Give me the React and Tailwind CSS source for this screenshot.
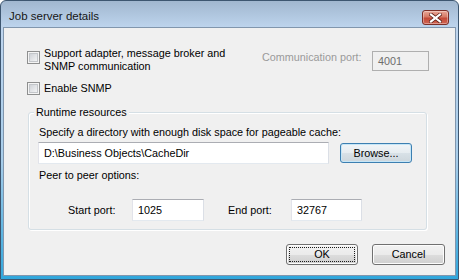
import React from 'react';

const font = { fontFamily: '"Liberation Sans", Arial, sans-serif' };

function Checkbox() {
  return (
    <div className="w-[13px] h-[13px] shrink-0 border border-[#8e8f8f] bg-[#f4f4f4] p-[1px]">
      <div className="w-full h-full border border-[#c3c6ca] bg-[linear-gradient(135deg,#d0d3d8,#f2f3f4)]" />
    </div>
  );
}

function TextBox({ value, className, disabled }) {
  return (
    <div
      className={
        'flex items-center pl-[5px] border shrink-0 ' +
        (disabled
          ? 'border-[#afafaf] bg-[#f0f0f0] text-[#6d6d6d] '
          : 'border-[#abadb3] border-l-[#e2e3ea] border-b-[#e3e9ef] border-r-[#dbdfe6] bg-white text-black ') +
        className
      }
    >
      {value}
    </div>
  );
}

function WinButton({ children, className, focused, hot }) {
  return (
    <div
      className={
        'shrink-0 rounded-[3px] border p-[2px] flex ' +
        (hot
          ? 'border-[#3c7fb1] bg-[linear-gradient(180deg,#f1f5f8_0%,#e6ecf0_50%,#d8e1e7_51%,#cdd6dc_100%)] shadow-[inset_0_0_0_1px_#c6e6f7] '
          : 'border-[#707070] bg-[linear-gradient(180deg,#f2f2f2_0%,#ebebeb_50%,#dddddd_51%,#cfcfcf_100%)] shadow-[inset_0_0_0_1px_#fcfcfc] ') +
        className
      }
    >
      <div
        className={
          'flex-1 flex items-center justify-center border ' +
          (focused ? 'border-dotted border-[#1a1a1a]' : 'border-transparent')
        }
      >
        {children}
      </div>
    </div>
  );
}

export default function App() {
  return (
    <div
      style={font}
      className="w-[459px] h-[280px] flex flex-col border border-[#3d5670] rounded-t-[6px] overflow-hidden bg-[linear-gradient(180deg,#a1b7cf_0px,#bed5ee_27px,#a7cdea_160px,#2ea6dc_280px)] text-[10.8px] text-black"
    >
      {/* title bar */}
      <div className="h-[26px] shrink-0 flex items-start justify-between pl-[8px] pr-[9px]">
        <span className="mt-[8px] leading-[15px] text-[11.5px] text-[#161616]">Job server details</span>
        <div className="mt-[9px] w-[27px] h-[15px] rounded-[3px] border border-[#7b2f28] bg-[linear-gradient(180deg,#e9a797_0%,#d67a66_45%,#c34a38_55%,#cf6453_100%)] shadow-[inset_0_0_0_1px_rgba(255,255,255,0.35)] flex items-center justify-center">
          <svg width="13" height="10" viewBox="0 0 13 10">
            <path d="M2 1.5 L11 8.5 M11 1.5 L2 8.5" stroke="#5b1f18" strokeWidth="3.6" strokeLinecap="square" />
            <path d="M2 1.5 L11 8.5 M11 1.5 L2 8.5" stroke="#ffffff" strokeWidth="2.2" strokeLinecap="square" />
          </svg>
        </div>
      </div>

      {/* client area */}
      <div className="flex-1 mx-[2px] mb-[3px] border border-[#8196ad] bg-[#f0f0f0] flex flex-col">
        {/* row 1 */}
        <div className="flex items-start pt-[19px]">
          <div className="ml-[23px] mt-[4px]">
            <Checkbox />
          </div>
          <span className="ml-[4px] w-[200px] leading-[13px]">
            Support adapter, message broker and SNMP communication
          </span>
          <span className="ml-[18px] mt-[4px] w-[110px] leading-[13px] text-[#9a9a9a]">Communication port:</span>
          <TextBox value="4001" disabled className="mt-[4px] w-[57px] h-[20px]" />
        </div>

        {/* row 2 */}
        <div className="flex items-center mt-[9px] ml-[23px] h-[13px]">
          <Checkbox />
          <span className="ml-[4px] leading-[13px]">Enable SNMP</span>
        </div>

        {/* group box */}
        <div className="relative mt-[17px] ml-[24px] w-[399px] h-[118px] rounded-[3px] border border-[#d5dfe5] shadow-[inset_1px_1px_0_#ffffff,1px_1px_0_#ffffff] flex flex-col pl-[9px] pt-[13px]">
          <span className="absolute -top-[7px] left-[5px] px-[2px] bg-[#f0f0f0] leading-[13px]">Runtime resources</span>
          <span className="pl-[1px] leading-[13px]">Specify a directory with enough disk space for pageable cache:</span>
          <div className="flex items-start mt-[3px]">
            <TextBox value="D:\Business Objects\CacheDir" className="w-[291px] h-[22px]" />
            <WinButton hot className="ml-[11px] mt-[1px] w-[72px] h-[20px]">
              Browse...
            </WinButton>
          </div>
          <span className="pl-[1px] mt-[5px] leading-[13px]">Peer to peer options:</span>
          <div className="flex items-center mt-[17px]">
            <span className="ml-[30px] w-[64px] leading-[13px]">Start port:</span>
            <TextBox value="1025" className="w-[72px] h-[22px]" />
            <span className="ml-[24px] w-[63px] leading-[13px]">End port:</span>
            <TextBox value="32767" className="w-[71px] h-[22px]" />
          </div>
        </div>

        {/* dialog buttons */}
        <div className="flex justify-end gap-[14px] pr-[10px] mt-[14px]">
          <WinButton focused className="w-[72px] h-[21px]">
            OK
          </WinButton>
          <WinButton className="w-[73px] h-[21px]">Cancel</WinButton>
        </div>
      </div>
    </div>
  );
}
